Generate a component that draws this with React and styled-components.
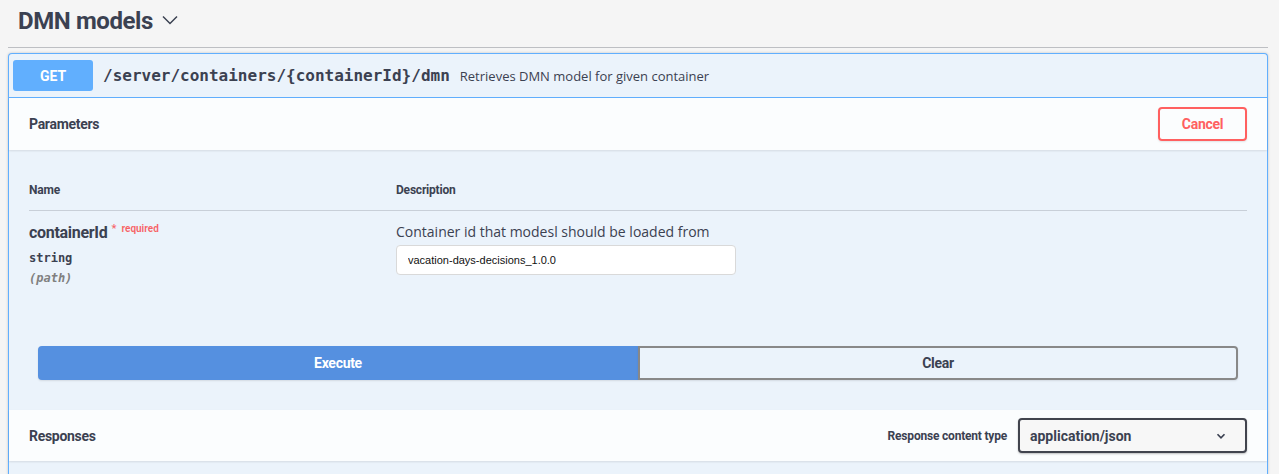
import React from "react";
import styled, {createGlobalStyle} from "styled-components";

const GlobalStyle = createGlobalStyle`
  html, body {
    margin: 0;
    padding: 0;
    background: #f5f5f5;
  }
  body {
    font-family: "Open Sans", "Liberation Sans", sans-serif;
    color: #3b4151;
  }
`;

const heading = `"Roboto", "Liberation Sans", sans-serif`;
const mono = `"DejaVu Sans Mono", "Liberation Mono", monospace`;

const App = () => {
    return (
        <Page>
            <GlobalStyle/>
            <TagHeader>
                <TagTitle>DMN models</TagTitle>
                <Chevron width="20" height="20" viewBox="0 0 20 20">
                    <path d="M3 6.5l7 7 7-7" fill="none" stroke="#3b4151" strokeWidth="1.5"/>
                </Chevron>
            </TagHeader>

            <Opblock>
                <Summary>
                    <Method>GET</Method>
                    <Path>/server/containers/&#123;containerId&#125;/dmn</Path>
                    <SummaryDesc>Retrieves DMN model for given container</SummaryDesc>
                </Summary>

                <SectionHeader>
                    <SectionTitle>Parameters</SectionTitle>
                    <CancelButton>Cancel</CancelButton>
                </SectionHeader>

                <ParamsBody>
                    <ParamsHead>
                        <NameCol><ColTitle>Name</ColTitle></NameCol>
                        <ColTitle>Description</ColTitle>
                    </ParamsHead>
                    <ParamRow>
                        <NameCol>
                            <ParamName>containerId<Required>*<small>required</small></Required></ParamName>
                            <ParamType>string</ParamType>
                            <ParamIn>(path)</ParamIn>
                        </NameCol>
                        <div>
                            <ParamDesc>Container id that modesl should be loaded from</ParamDesc>
                            <TextInput defaultValue="vacation-days-decisions_1.0.0"/>
                        </div>
                    </ParamRow>
                </ParamsBody>

                <ExecuteWrapper>
                    <ExecuteButton>Execute</ExecuteButton>
                    <ClearButton>Clear</ClearButton>
                </ExecuteWrapper>

                <SectionHeader $short>
                    <SectionTitle>Responses</SectionTitle>
                    <ContentType>
                        <ContentLabel>Response content type</ContentLabel>
                        <Select>
                            <span>application/json</span>
                            <svg width="14" height="14" viewBox="0 0 20 20">
                                <path d="M5 7.5l5 5 5-5" fill="none" stroke="#3b4151" strokeWidth="2.4"/>
                            </svg>
                        </Select>
                    </ContentType>
                </SectionHeader>
                <Rest/>
            </Opblock>
        </Page>
    );
};

const Page = styled.div`
  padding: 0 11px 0 8px;
  height: 474px;
  overflow: hidden;
`;

const TagHeader = styled.div`
  display: flex;
  align-items: center;
  height: 41px;
  padding: 0 10px 6px;
  border-bottom: 1px solid rgba(59, 65, 81, .3);
`;

const TagTitle = styled.h3`
  margin: 0;
  font-family: ${heading};
  font-size: 24px;
  font-weight: 700;
  letter-spacing: -0.4px;
  color: #3b4151;
`;

const Chevron = styled.svg`
  margin-left: 7px;
  margin-top: -2px;
`;

const Opblock = styled.div`
  margin-top: 5px;
  border: 1px solid #61affe;
  border-radius: 4px 4px 0 0;
  border-bottom: none;
  background: #ebf3fb;
  box-shadow: 0 0 3px rgba(0, 0, 0, .19);
`;

const Summary = styled.div`
  display: flex;
  align-items: center;
  height: 43px;
  padding: 0 4px;
  border-bottom: 1px solid #61affe;
`;

const Method = styled.div`
  width: 80px;
  height: 31px;
  display: flex;
  align-items: center;
  justify-content: center;
  border-radius: 3px;
  background: #61affe;
  color: #fff;
  font-family: ${heading};
  font-size: 14px;
  font-weight: 700;
`;

const Path = styled.span`
  margin-left: 10px;
  font-family: ${mono};
  font-size: 16px;
  font-weight: 700;
  color: #3b4151;
`;

const SummaryDesc = styled.span`
  margin-left: 10px;
  font-size: 13px;
  color: #3b4151;
`;

const SectionHeader = styled.div`
  display: flex;
  align-items: center;
  justify-content: space-between;
  height: ${p => p.$short ? 51 : 52}px;
  padding: 0 20px;
  background: rgba(255, 255, 255, .8);
  box-shadow: 0 1px 2px rgba(0, 0, 0, .1);
`;

const SectionTitle = styled.h4`
  margin: 0;
  font-family: ${heading};
  font-size: 14px;
  font-weight: 700;
  letter-spacing: -0.3px;
  color: #3b4151;
`;

const CancelButton = styled.button`
  width: 89px;
  height: 34px;
  border: 2px solid #ff6060;
  border-radius: 4px;
  background: transparent;
  color: #ff6060;
  font-family: ${heading};
  font-size: 14px;
  font-weight: 700;
  letter-spacing: -0.3px;
  box-shadow: 0 1px 2px rgba(0, 0, 0, .1);
`;

const ParamsBody = styled.div`
  padding: 32px 20px 0;
  height: 164px;
`;

const ParamsHead = styled.div`
  display: flex;
  align-items: center;
  line-height: 16px;
  padding-bottom: 12px;
  border-bottom: 1px solid rgba(59, 65, 81, .2);
`;

const NameCol = styled.div`
  width: 367px;
  flex: none;
`;

const ColTitle = styled.span`
  display: block;
  font-family: ${heading};
  font-size: 12px;
  font-weight: 700;
  letter-spacing: -0.2px;
  color: #3b4151;
`;

const ParamRow = styled.div`
  display: flex;
  padding-top: 12px;
`;

const ParamName = styled.div`
  font-family: ${heading};
  font-size: 16px;
  font-weight: 700;
  letter-spacing: -0.3px;
  color: #3b4151;
  line-height: 20px;
`;

const Required = styled.span`
  position: relative;
  top: -6px;
  margin-left: 4px;
  color: rgba(255, 0, 0, .6);
  font-size: 11px;
  letter-spacing: 0;

  small {
    margin-left: 5px;
    font-size: 10px;
  }
`;

const ParamType = styled.div`
  margin-top: 6px;
  font-family: ${mono};
  font-size: 12px;
  font-weight: 600;
  color: #3b4151;
`;

const ParamIn = styled.div`
  margin-top: 6px;
  font-family: ${mono};
  font-size: 12px;
  font-style: italic;
  font-weight: 600;
  color: gray;
`;

const ParamDesc = styled.div`
  font-size: 14px;
  line-height: 20px;
  color: #3b4151;
  margin-top: -1px;
`;

const TextInput = styled.input`
  box-sizing: border-box;
  display: block;
  margin-top: 3px;
  width: 340px;
  height: 30px;
  padding: 0 11px;
  border: 1px solid #d9d9d9;
  border-radius: 4px;
  background: #fff;
  font-family: "Liberation Sans", sans-serif;
  font-size: 11px;
  color: #111;
  outline: none;
`;

const ExecuteWrapper = styled.div`
  display: flex;
  padding: 0 29px 30px;
  height: 34px;
`;

const BaseButton = styled.button`
  flex: 1;
  height: 34px;
  font-family: ${heading};
  font-size: 14px;
  font-weight: 700;
  letter-spacing: -0.3px;
  box-shadow: 0 1px 2px rgba(0, 0, 0, .1);
`;

const ExecuteButton = styled(BaseButton)`
  border: 2px solid #5590e0;
  border-radius: 4px 0 0 4px;
  background: #5590e0;
  color: #fff;
`;

const ClearButton = styled(BaseButton)`
  border: 2px solid #888;
  border-radius: 0 4px 4px 0;
  background: transparent;
  color: #3b4151;
`;

const ContentType = styled.div`
  display: flex;
  align-items: center;
`;

const ContentLabel = styled.span`
  margin-right: 11px;
  font-family: ${heading};
  font-size: 12px;
  font-weight: 700;
  letter-spacing: -0.2px;
  color: #3b4151;
`;

const Select = styled.div`
  box-sizing: border-box;
  display: flex;
  align-items: center;
  justify-content: space-between;
  width: 229px;
  height: 35px;
  padding: 0 17px 0 10px;
  border: 2px solid #41444e;
  border-radius: 4px;
  background: #f7f7f7;
  font-family: ${heading};
  font-size: 14px;
  font-weight: 700;
  color: #3b4151;
  box-shadow: 0 1px 2px rgba(0, 0, 0, .25);
`;

const Rest = styled.div`
  height: 20px;
`;

export default App;
